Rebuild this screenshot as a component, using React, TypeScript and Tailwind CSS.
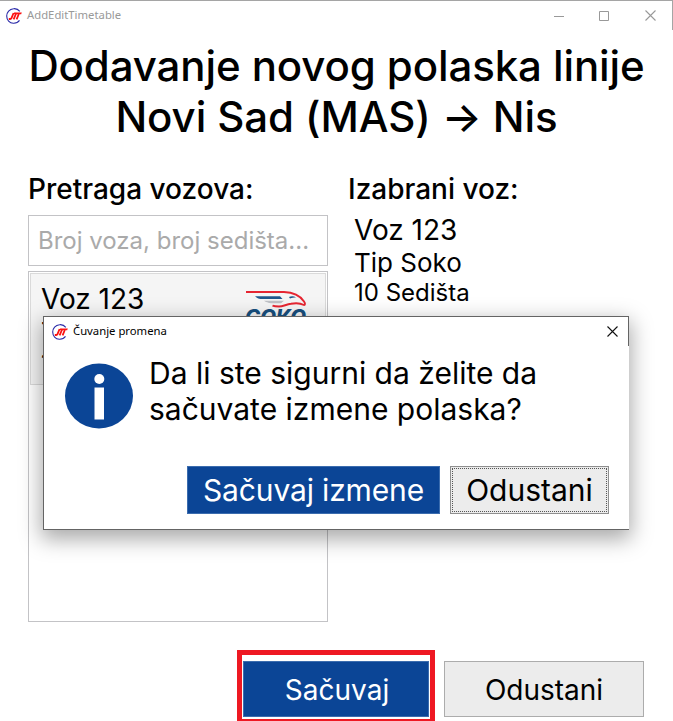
const UI = "font-['Inter','Liberation_Sans',sans-serif]";

function RailLogo() {
  return (
    <svg width="16" height="16" viewBox="0 0 16 16" className="shrink-0">
      <path d="M13.800 3.400C12 1 9.500 .5 7.500 .700C3.500 1 .7 4.300 .7 8C.7 12 3.600 15 7.300 15.200C9.800 15.300 12 14.600 13.500 12.400" fill="none" stroke="#2a2aa8" strokeWidth="1.100" />
      <path d="M2.800 11H4.200C5 11 5.300 10.500 5.600 9.800L7.600 5M7.600 11.400L10.300 5M10.600 11.400L12.800 6" fill="none" stroke="#fb1212" strokeWidth="1.800" />
      <path d="M8 4.400H15.800L15.200 6.200H8Z" fill="#fb1212" />
    </svg>
  );
}

function CloseGlyph({ color }: { color: string }) {
  return (
    <svg width="11" height="11" viewBox="0 0 11 11" className="shrink-0">
      <path d="M.5 .5L10.500 10.500M10.500 .5L.5 10.500" stroke={color} strokeWidth="1.100" />
    </svg>
  );
}

function SokoLogo() {
  return (
    <svg width="62" height="42" viewBox="0 0 62 42" className="shrink-0 overflow-visible">
      <path d="M1 1H39C48 1.200 55 4.500 59 10.500C60.500 12.800 60 13.800 59 14C55 12 50 12 46 12.800C41 13.500 38 15.500 34 15.500C31 15.500 29 15.300 27.500 14.700" fill="none" stroke="#e62531" strokeWidth="1.900" />
      <path d="M10 5.200H35L37.500 8H18C14 8 12 7.200 10 5.200Z" fill="#20578c" />
      <path d="M19 9.700H39L36 12.300H29C24 12.300 22 11.500 19 9.700Z" fill="#bfc1c6" />
      <path d="M44 6C46.500 5 49 5.200 51 6.500C48.500 6.500 47 6.800 45 7.500Z" fill="#20578c" />
      <text x="0" y="33" textLength="61" lengthAdjust="spacingAndGlyphs" fontSize="20" fontWeight="800" fontStyle="italic" fontFamily="Inter, sans-serif" fill="#174f7e">СОКО</text>
    </svg>
  );
}

function ConfirmDialog() {
  return (
    <section className="absolute left-[43px] top-[315px] flex h-[214px] w-[586px] flex-col border-b border-l border-t border-[#646464] bg-white shadow-[0_7px_20px_2px_rgba(0,0,0,0.34)]">
      <header className="flex h-[29px] shrink-0 items-center border-r border-[#646464] pl-2 pr-[10px]">
        <RailLogo />
        <span className="ml-[5px] grow pb-px font-['Noto_Sans','Open_Sans',sans-serif] text-[11.300px] leading-4 text-black">Čuvanje promena</span>
        <CloseGlyph color="#111" />
      </header>
      <div className="flex pl-[21px] pt-[9px]">
        <svg width="68" height="66" viewBox="0 0 68 66" className="mt-2 shrink-0">
          <ellipse cx="34" cy="33" rx="34" ry="32.500" fill="#0b4596" />
          <circle cx="34.300" cy="16" r="5" fill="#fff" />
          <path d="M29.500 24.500H39V56.500H29.500Z" fill="#fff" />
        </svg>
        <p className="ml-4 whitespace-nowrap text-[30px] leading-[36px]">Da li ste sigurni da želite da<br />sačuvate izmene polaska?</p>
      </div>
      <div className="mb-[15px] mr-[20px] mt-auto flex justify-end gap-[10px]">
        <button className="h-[48px] w-[253px] border border-[#3b6cae] bg-[#0b4596] text-[30px] leading-9 tracking-[-0.150px] text-white">Sačuvaj izmene</button>
        <button className="h-[48px] w-[159px] border border-[#8f8f8f] bg-[#ececec] p-px text-[30px] leading-9">
          <span className="flex h-full items-center justify-center border border-dotted border-[#555]">Odustani</span>
        </button>
      </div>
    </section>
  );
}

export default function App() {
  return (
    <div className={`relative flex h-[721px] w-[673px] flex-col overflow-hidden border-t border-[#a5a5a5] bg-white text-black ${UI}`}>
      <header className="flex h-[29px] shrink-0 items-center border-r border-[#a5a5a5] pl-[6px] pr-4">
        <RailLogo />
        <span className="ml-[5px] grow pb-px font-['Noto_Sans','Open_Sans',sans-serif] text-[11.300px] leading-4 text-[#999]">AddEditTimetable</span>
        <svg width="56" height="10" viewBox="0 0 56 10" className="mr-[35px]">
          <path d="M0 5.500H10M45.500 .5H54.500V9.500H45.500Z" fill="none" stroke="#999" />
        </svg>
        <CloseGlyph color="#999" />
      </header>

      <h1 className="mt-[10px] whitespace-nowrap text-center text-[42px] font-medium leading-[51px] tracking-[-0.100px]">Dodavanje novog polaska linije<br />Novi Sad (MAS) → Nis</h1>

      <main className="mt-[30px] flex gap-5 pl-7">
        <section className="flex w-[300px] flex-col">
          <h2 className="h-[43px] whitespace-nowrap text-[28px] font-medium leading-[35px]">Pretraga vozova:</h2>
          <input className="h-[51px] w-full border border-[#c3c3c6] px-[9px] text-[24px] placeholder:text-[#aaa]" placeholder="Broj voza, broj sedišta..." />
          <div className="mt-[5px] h-[351px] border border-[#c3c3c6] p-px">
            <article className="flex h-[112px] justify-between border border-[#dadada] bg-[#f5f5f5] pl-[10px] pr-[18px]">
              <div className="pt-2">
                <p className="text-[28px] leading-[34px]">Voz 123</p>
                <p className="text-[26px] leading-8">Tip Soko</p>
                <p className="text-[24px] leading-[30px]">10 Sedišta</p>
              </div>
              <div className="pt-[17px]"><SokoLogo /></div>
            </article>
          </div>
        </section>
        <section>
          <h2 className="h-[41px] whitespace-nowrap text-[28px] font-medium leading-[35px]">Izabrani voz:</h2>
          <div className="pl-[6px]">
            <p className="text-[28px] leading-[34px]">Voz 123</p>
            <p className="text-[26px] leading-8">Tip Soko</p>
            <p className="text-[24px] leading-[28px]">10 Sedišta</p>
          </div>
        </section>
      </main>

      <footer className="mt-[28px] flex items-start pl-[237px]">
        <div className="h-[74px] w-[198px] shrink-0 border-[5px] border-[#ee1822] px-px pt-[6px]">
          <button className="h-[56px] w-full border border-[#3b6cae] bg-[#0b4596] pl-[2px] pt-[2px] text-[28px] leading-8 text-white">Sačuvaj</button>
        </div>
        <button className="ml-[9px] mt-[11px] h-[56px] w-[200px] shrink-0 border border-[#acacac] bg-[#ececec] pt-[2px] text-[28px] leading-8">Odustani</button>
      </footer>

      <ConfirmDialog />
    </div>
  );
}
